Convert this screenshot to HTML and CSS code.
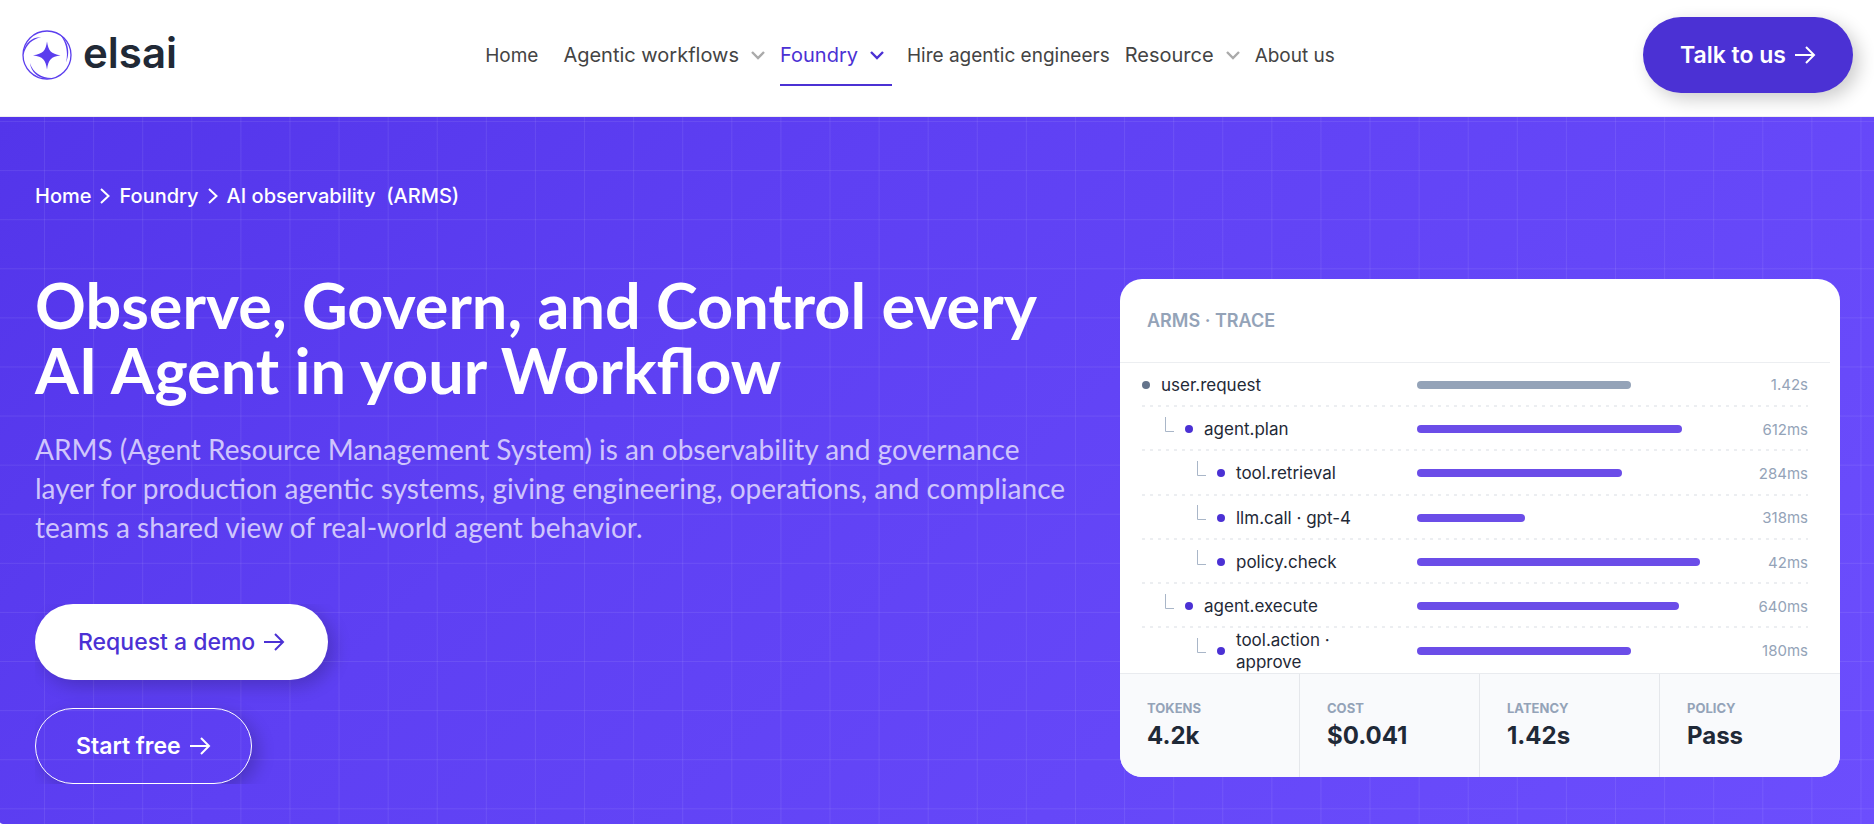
FILE: index.html
```
<!DOCTYPE html>
<html lang="en">
<head>
    <meta charset="UTF-8">
    <meta name="viewport" content="width=device-width, initial-scale=1.0">
    <title>AI observability (ARMS) - elsai</title>
    <link rel="stylesheet" href="styles.css">
</head>
<body>
    <!-- Icons shared by the page -->
    <svg class="sprite" aria-hidden="true">
        <symbol id="arrow" viewBox="0 0 22 18">
            <path d="M1 9h19M12 1l8 8-8 8" fill="none" stroke="currentColor" stroke-width="2"/>
        </symbol>
        <symbol id="chevron-down" viewBox="0 0 14 9">
            <path d="M1 1l6 6 6-6" fill="none" stroke="currentColor" stroke-width="2.4"/>
        </symbol>
        <symbol id="chevron-right" viewBox="0 0 10 16">
            <path d="M1 1l7.500 7L1 15" fill="none" stroke="currentColor" stroke-width="2"/>
        </symbol>
        <symbol id="elbow" viewBox="0 0 9 15">
            <path d="M.5 0v14.500H9" fill="none" stroke="currentColor" stroke-width="1"/>
        </symbol>
    </svg>

    <header class="header">
        <a class="logo" href="#">
            <svg class="logo-mark" viewBox="0 0 50 50" aria-hidden="true">
                <circle cx="25" cy="25" r="24" fill="none" stroke="currentColor" stroke-width="1.3"/>
                <path d="M1 23C3 13 10 7 19 7.300 11 9 4 14 1.500 25zM38 4.500C46 11 48.500 22 44 32.500 46.500 22 44 12 38 4.500zM8 33C11 43 20 48.500 31 48 20 51 9 44 8 33z" fill="currentColor"/>
                <path d="M25 11.500C26.500 21 29 23.800 38.500 25.300 29 26.800 26.500 29.500 25 39.500 23.500 29.500 21 26.800 11 25.300 21 23.800 23.500 21 25 11.500z" fill="currentColor"/>
            </svg>
            <span class="logo-text">elsai</span>
        </a>

        <nav class="nav">
            <a class="nav-link home" href="#">Home</a>
            <a class="nav-link has-menu" href="#">Agentic workflows <svg class="caret"><use href="#chevron-down"/></svg></a>
            <a class="nav-link has-menu active" href="#">Foundry <svg class="caret"><use href="#chevron-down"/></svg></a>
            <a class="nav-link" href="#">Hire agentic engineers</a>
            <a class="nav-link has-menu" href="#">Resource <svg class="caret"><use href="#chevron-down"/></svg></a>
            <a class="nav-link" href="#">About us</a>
        </nav>

        <a class="btn btn-primary" href="#">Talk to us <svg class="arrow"><use href="#arrow"/></svg></a>
    </header>

    <main class="hero">
        <nav class="breadcrumb" aria-label="Breadcrumb">
            <a href="#">Home</a>
            <svg class="crumb-sep"><use href="#chevron-right"/></svg>
            <a href="#">Foundry</a>
            <svg class="crumb-sep"><use href="#chevron-right"/></svg>
            <span>AI observability&nbsp; (ARMS)</span>
        </nav>

        <div class="hero-grid">
            <div class="hero-text">
                <h1>Observe, Govern, and Control every<br>AI Agent in your Workflow</h1>
                <p>ARMS (Agent Resource Management System) is an observability and governance layer for production agentic systems, giving engineering, operations, and compliance teams a shared view of real-world agent behavior.</p>
                <div class="actions">
                    <a class="btn btn-white" href="#">Request a demo <svg class="arrow"><use href="#arrow"/></svg></a>
                    <a class="btn btn-outline" href="#">Start free <svg class="arrow"><use href="#arrow"/></svg></a>
                </div>
            </div>

            <!-- Trace card -->
            <section class="card">
                <h2 class="card-title">ARMS · TRACE</h2>
                <ul class="trace">
                    <li class="row root">
                        <span class="name"><i class="dot"></i>user.request</span>
                        <span class="track"><span class="bar" style="width: 71%"></span></span>
                        <span class="time">1.42s</span>
                    </li>
                    <li class="row level-1">
                        <span class="name"><svg class="elbow"><use href="#elbow"/></svg><i class="dot"></i>agent.plan</span>
                        <span class="track"><span class="bar" style="width: 88%"></span></span>
                        <span class="time">612ms</span>
                    </li>
                    <li class="row level-2">
                        <span class="name"><svg class="elbow"><use href="#elbow"/></svg><i class="dot"></i>tool.retrieval</span>
                        <span class="track"><span class="bar" style="width: 68%"></span></span>
                        <span class="time">284ms</span>
                    </li>
                    <li class="row level-2">
                        <span class="name"><svg class="elbow"><use href="#elbow"/></svg><i class="dot"></i>llm.call · gpt-4</span>
                        <span class="track"><span class="bar" style="width: 36%"></span></span>
                        <span class="time">318ms</span>
                    </li>
                    <li class="row level-2">
                        <span class="name"><svg class="elbow"><use href="#elbow"/></svg><i class="dot"></i>policy.check</span>
                        <span class="track"><span class="bar" style="width: 94%"></span></span>
                        <span class="time">42ms</span>
                    </li>
                    <li class="row level-1">
                        <span class="name"><svg class="elbow"><use href="#elbow"/></svg><i class="dot"></i>agent.execute</span>
                        <span class="track"><span class="bar" style="width: 87%"></span></span>
                        <span class="time">640ms</span>
                    </li>
                    <li class="row level-2">
                        <span class="name"><svg class="elbow"><use href="#elbow"/></svg><i class="dot"></i>tool.action · approve</span>
                        <span class="track"><span class="bar" style="width: 71%"></span></span>
                        <span class="time">180ms</span>
                    </li>
                </ul>
                <dl class="stats">
                    <div class="stat"><dt>TOKENS</dt><dd>4.2k</dd></div>
                    <div class="stat"><dt>COST</dt><dd>$0.041</dd></div>
                    <div class="stat"><dt>LATENCY</dt><dd>1.42s</dd></div>
                    <div class="stat"><dt>POLICY</dt><dd>Pass</dd></div>
                </dl>
            </section>
        </div>
    </main>
</body>
</html>
```
FILE: styles.css
```
* {
    box-sizing: border-box;
}

body {
    margin: 0;
    background-color: #fff;
    font-family: Inter, sans-serif;
    color: #1f2937;
}

a {
    color: inherit;
    text-decoration: none;
}

.sprite {
    display: none;
}

/* Header */
.header {
    display: flex;
    align-items: center;
    justify-content: space-between;
    padding: 17px 21px 23px 22px;
    border-bottom: 1px solid #eee;
}

.logo {
    display: flex;
    align-items: center;
    gap: 11px;
}

.logo-mark {
    width: 50px;
    height: 50px;
    color: #5b3eee;
}

.logo-text {
    font-size: 42px;
    line-height: 50px;
    font-weight: 600;
    color: #212936;
    padding-bottom: 4px;
}

.nav {
    display: flex;
    align-items: center;
    gap: 15px;
}

.nav-link {
    display: flex;
    align-items: center;
    gap: 12px;
    height: 62px;
    font-size: 19px;
    color: #444;
    white-space: nowrap;
}

.nav-link.home {
    margin-right: 10px;
}

.nav-link.has-menu {
    font-size: 20px;
}

.nav-link.active {
    color: #4b31d4;
    padding-right: 8px;
    box-shadow: inset 0 -2px #4b31d4;
}

.caret {
    width: 14px;
    height: 9px;
    color: #aaa;
}

.active .caret {
    color: #4b31d4;
}

/* Buttons */
.btn {
    display: inline-flex;
    align-items: center;
    gap: 8px;
    height: 76px;
    padding: 0 40px;
    border: 1px solid transparent;
    border-radius: 38px;
    font-size: 23px;
    font-weight: 600;
    white-space: nowrap;
    box-shadow: 6px 6px 18px rgba(0, 0, 0, 0.2);
}

.btn-primary {
    padding: 0 36px;
    background-color: #4b31d4;
    color: #fff;
}

.btn-white {
    padding: 0 42px;
    background-color: #fff;
    color: #4b31d4;
    font-weight: 500;
}

.btn-outline {
    border-color: #fff;
    color: #fff;
}

.arrow {
    width: 22px;
    height: 18px;
}

/* Hero */
.hero {
    min-height: 707px;
    padding: 64px 34px 38px 35px;
    color: #fff;
    border-bottom-left-radius: 5px 2px;
    background-image:
        linear-gradient(rgba(255, 255, 255, 0.08) 1px, transparent 1px),
        linear-gradient(90deg, rgba(255, 255, 255, 0.08) 1px, transparent 1px),
        linear-gradient(135deg, #5335ea, #5e40f3 35%, #6c4efd);
    background-size: 2.62vw 2.62vw, 2.62vw 2.62vw, auto;
    background-position: 44px 4px, 44px 4px, 0 0;
}

.breadcrumb {
    display: flex;
    align-items: center;
    gap: 9px;
    height: 30px;
    font-size: 20px;
    font-weight: 500;
}

.crumb-sep {
    width: 10px;
    height: 16px;
}

.hero-grid {
    display: grid;
    grid-template-columns: minmax(0, 1fr) minmax(0, 720px);
    align-items: center;
    gap: 32px;
    margin-top: 61px;
}

.hero-text h1 {
    margin: 0;
    font: 700 63px/65px Lato, sans-serif;
}

.hero-text p {
    max-width: 1040px;
    margin: 28px 0 56px;
    font: 400 28px/1.4 Lato, sans-serif;
    color: #cfc5fc;
}

.actions {
    display: flex;
    flex-direction: column;
    align-items: flex-start;
    gap: 28px;
    overflow: hidden;
}

/* Trace card */
.card {
    border-radius: 22px;
    background-color: #fff;
    color: #1f2937;
    overflow: hidden;
}

.card-title {
    margin: 0 10px 0 0;
    padding: 28px 27px 27px;
    border-bottom: 1px solid #eceef1;
    font-size: 18px;
    line-height: 28px;
    font-weight: 600;
    color: #94a3b8;
}

.trace {
    display: grid;
    grid-template-rows: repeat(7, 1fr);
    height: 310px;
    margin: 0;
    padding: 0 32px 0 22px;
    list-style: none;
}

.row {
    display: grid;
    grid-template-columns: 275px 1fr 90px;
    align-items: center;
    background: repeating-linear-gradient(90deg, #eceef1 0 3px, transparent 3px 8px) left bottom / 100% 2px no-repeat;
}

.row:last-child {
    background: none;
}

.name {
    display: flex;
    align-items: center;
    gap: 11px;
    padding-right: 24px;
    font-size: 17px;
    line-height: 22px;
}

.level-1 .name {
    padding-left: 23px;
}

.level-2 .name {
    padding-left: 55px;
}

.elbow {
    flex: none;
    width: 9px;
    height: 15px;
    margin-bottom: 10px;
    color: #a9b6c8;
}

.dot {
    flex: none;
    width: 8px;
    height: 8px;
    border-radius: 50%;
    background-color: #4b31d4;
}

.root .dot {
    background-color: #64748b;
}

.bar {
    display: block;
    height: 8px;
    border-radius: 4px;
    background-color: #6b4de8;
}

.root .bar {
    background-color: #94a3b8;
}

.time {
    font-size: 15px;
    text-align: right;
    color: #94a3b8;
}

.stats {
    display: grid;
    grid-template-columns: repeat(4, 1fr);
    margin: 0;
    border-top: 1px solid #e9ebef;
    background-color: #f9fafc;
}

.stat {
    padding: 25px 27px 26px;
    border-right: 1px solid #e5e7eb;
}

.stat:last-child {
    border-right: none;
}

.stat dt {
    font-size: 13px;
    line-height: 18px;
    font-weight: 700;
    color: #94a3b8;
}

.stat dd {
    margin: 4px 0 0;
    font-size: 24px;
    line-height: 30px;
    font-weight: 700;
}
```
